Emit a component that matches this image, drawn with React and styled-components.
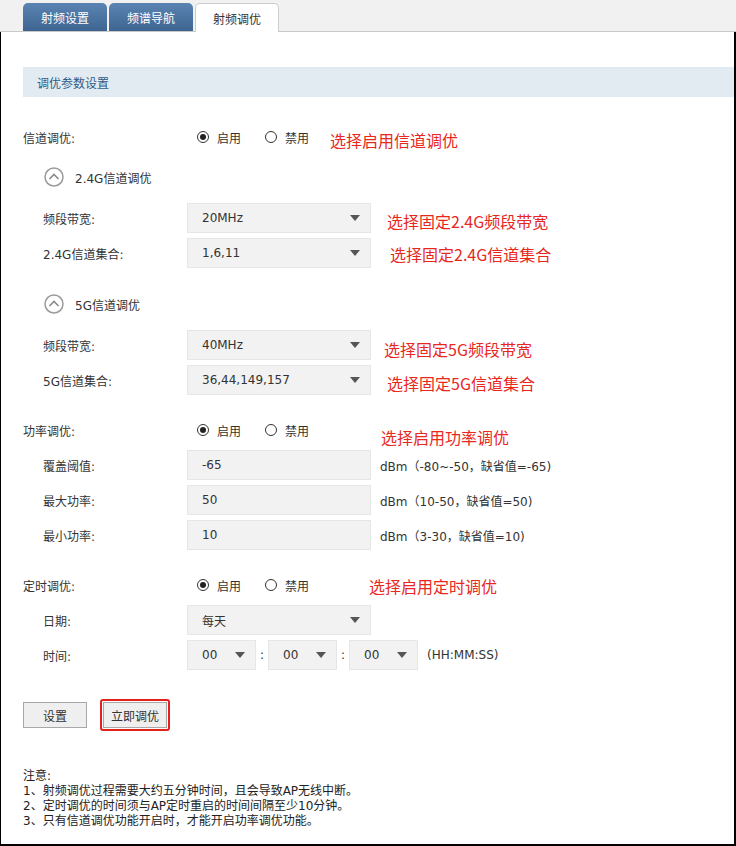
import React from "react";
import styled, { createGlobalStyle } from "styled-components";

const GlobalStyle = createGlobalStyle`
  html, body {
    margin: 0;
    padding: 0;
    background: #ffffff;
  }
  body {
    font-family: "DejaVu Sans", "Noto Sans CJK SC", sans-serif;
    font-size: 12px;
    color: #333333;
  }
`;

const Page = styled.div`
  width: 736px;
  height: 846px;
  display: flex;
  flex-direction: column;
  background: #ffffff;
`;

const TabBar = styled.div`
  height: 28px;
  padding: 3px 0 0 23px;
  display: flex;
  gap: 2px;
  background: #f1f1f1;
  border-bottom: 1px solid #c9c9c9;
`;

const Tab = styled.div`
  width: 84px;
  height: ${(p) => (p.$active ? "29px" : "28px")};
  box-sizing: border-box;
  display: flex;
  align-items: center;
  justify-content: center;
  border-radius: 5px 5px 0 0;
  font-size: 12px;
  color: ${(p) => (p.$active ? "#333333" : "#ffffff")};
  background: ${(p) =>
    p.$active ? "#ffffff" : "linear-gradient(#5b84b2, #3e6592)"};
  border: ${(p) => (p.$active ? "1px solid #cccccc" : "none")};
  border-bottom: none;
  margin-bottom: ${(p) => (p.$active ? "-1px" : "0")};
`;

const Panel = styled.div`
  flex: 1;
  display: flex;
  flex-direction: column;
  padding: 35px 0 0 22px;
  border-left: 1px solid #000000;
  border-right: 2px solid #000000;
  border-bottom: 2px solid #000000;
`;

const SectionHead = styled.div`
  height: 30px;
  display: flex;
  align-items: center;
  padding-left: 14px;
  background: #e3ebf2;
  color: #2c5c8a;
`;

const Row = styled.div`
  height: 30px;
  display: flex;
  align-items: center;
  margin-top: ${(p) => p.$mt || 5}px;
  padding-left: ${(p) => (p.$sub ? 20 : 0)}px;
`;

const Label = styled.div`
  width: ${(p) => (p.$sub ? 144 : 174)}px;
  flex-shrink: 0;
`;

const RadioItem = styled.label`
  display: flex;
  align-items: center;
  gap: 8px;
  margin-right: ${(p) => (p.$last ? 0 : 24)}px;
`;

const RadioDot = styled.span`
  width: 12px;
  height: 12px;
  box-sizing: border-box;
  border: 1px solid #333333;
  border-radius: 50%;
  display: flex;
  align-items: center;
  justify-content: center;
  &::after {
    content: "";
    width: 6px;
    height: 6px;
    border-radius: 50%;
    background: ${(p) => (p.$on ? "#222222" : "transparent")};
  }
`;

const Note = styled.span`
  font-family: "Noto Sans CJK SC", sans-serif;
  font-size: 16px;
  color: #e8271d;
  margin-left: ${(p) => p.$ml}px;
  margin-top: ${(p) => p.$dy || 0}px;
  white-space: nowrap;
`;

const SubHead = styled.div`
  display: flex;
  align-items: center;
  gap: 11px;
  padding-left: 21px;
`;

const Box = styled.div`
  width: ${(p) => p.$w || 184}px;
  height: 30px;
  box-sizing: border-box;
  display: flex;
  align-items: center;
  justify-content: space-between;
  padding: 0 10px 0 14px;
  background: #f2f2f2;
  border: 1px solid #e6e6e6;
`;

const Arrow = styled.span`
  width: 0;
  height: 0;
  border-left: 5px solid transparent;
  border-right: 5px solid transparent;
  border-top: 6px solid #555555;
`;

const Unit = styled.span`
  margin-left: 9px;
  white-space: nowrap;
`;

const Colon = styled.span`
  width: 12px;
  text-align: center;
`;

const ButtonRow = styled.div`
  display: flex;
  align-items: center;
  gap: 13px;
  margin-top: 29px;
`;

const Button = styled.button`
  width: 64px;
  height: 26px;
  padding: 0;
  background: #efefef;
  border: 1px solid #a8a8a8;
  font-family: "Noto Sans CJK SC", sans-serif;
  font-size: 12px;
  color: #333333;
`;

const Highlight = styled.div`
  padding: 1px;
  border: 2px solid #e3201b;
  border-radius: 3px;
  display: flex;
`;

const Notes = styled.div`
  margin-top: 38px;
  line-height: 15px;
  color: #222222;
`;

function Radios({ on = true }) {
  return (
    <>
      <RadioItem>
        <RadioDot $on={on} />
        启用
      </RadioItem>
      <RadioItem $last>
        <RadioDot $on={!on} />
        禁用
      </RadioItem>
    </>
  );
}

function Collapse() {
  return (
    <svg width="20" height="20" viewBox="0 0 20 20">
      <circle cx="10" cy="10" r="9" fill="none" stroke="#9a9a9a" strokeWidth="1.5" />
      <polyline
        points="5.5,12 10,7.5 14.5,12"
        fill="none"
        stroke="#8a8a8a"
        strokeWidth="1.6"
      />
    </svg>
  );
}

function Select({ value, w }) {
  return (
    <Box $w={w}>
      <span>{value}</span>
      <Arrow />
    </Box>
  );
}

export default function App() {
  return (
    <Page>
      <GlobalStyle />
      <TabBar>
        <Tab>射频设置</Tab>
        <Tab>频谱导航</Tab>
        <Tab $active>射频调优</Tab>
      </TabBar>
      <Panel>
        <SectionHead>调优参数设置</SectionHead>

        <Row $mt={25}>
          <Label>信道调优:</Label>
          <Radios />
          <Note $ml={21} $dy={5}>选择启用信道调优</Note>
        </Row>
        <Row $mt={10}>
          <SubHead>
            <Collapse />
            2.4G信道调优
          </SubHead>
        </Row>
        <Row $sub $mt={11}>
          <Label $sub>频段带宽:</Label>
          <Select value="20MHz" />
          <Note $ml={16} $dy={6}>选择固定2.4G频段带宽</Note>
        </Row>
        <Row $sub>
          <Label $sub>2.4G信道集合:</Label>
          <Select value="1,6,11" />
          <Note $ml={19} $dy={2}>选择固定2.4G信道集合</Note>
        </Row>

        <Row $mt={21}>
          <SubHead>
            <Collapse />
            5G信道调优
          </SubHead>
        </Row>
        <Row $sub $mt={11}>
          <Label $sub>频段带宽:</Label>
          <Select value="40MHz" />
          <Note $ml={13} $dy={8}>选择固定5G频段带宽</Note>
        </Row>
        <Row $sub>
          <Label $sub>5G信道集合:</Label>
          <Select value="36,44,149,157" />
          <Note $ml={16} $dy={6}>选择固定5G信道集合</Note>
        </Row>

        <Row $mt={20}>
          <Label>功率调优:</Label>
          <Radios />
          <Note $ml={72} $dy={13}>选择启用功率调优</Note>
        </Row>
        <Row $sub>
          <Label $sub>覆盖阈值:</Label>
          <Box>-65</Box>
          <Unit>dBm（-80~-50，缺省值=-65)</Unit>
        </Row>
        <Row $sub>
          <Label $sub>最大功率:</Label>
          <Box>50</Box>
          <Unit>dBm（10-50，缺省值=50)</Unit>
        </Row>
        <Row $sub>
          <Label $sub>最小功率:</Label>
          <Box>10</Box>
          <Unit>dBm（3-30，缺省值=10)</Unit>
        </Row>

        <Row $mt={20}>
          <Label>定时调优:</Label>
          <Radios />
          <Note $ml={60} $dy={2}>选择启用定时调优</Note>
        </Row>
        <Row $sub>
          <Label $sub>日期:</Label>
          <Select value="每天" />
        </Row>
        <Row $sub>
          <Label $sub>时间:</Label>
          <Select value="00" w={69} />
          <Colon>:</Colon>
          <Select value="00" w={69} />
          <Colon>:</Colon>
          <Select value="00" w={69} />
          <Unit>(HH:MM:SS)</Unit>
        </Row>

        <ButtonRow>
          <Button>设置</Button>
          <Highlight>
            <Button>立即调优</Button>
          </Highlight>
        </ButtonRow>

        <Notes>
          <div>注意:</div>
          <div>1、射频调优过程需要大约五分钟时间，且会导致AP无线中断。</div>
          <div>2、定时调优的时间须与AP定时重启的时间间隔至少10分钟。</div>
          <div>3、只有信道调优功能开启时，才能开启功率调优功能。</div>
        </Notes>
      </Panel>
    </Page>
  );
}
